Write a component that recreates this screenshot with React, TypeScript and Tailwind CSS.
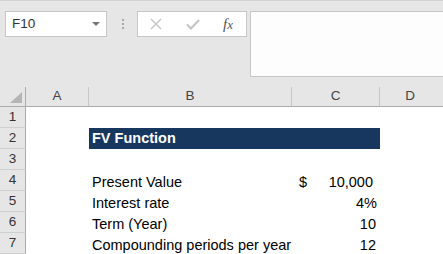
import { ReactNode } from 'react'

type Row = {
  n: number
  b?: ReactNode
  c?: ReactNode
  title?: boolean
}

const rows: Row[] = [
  { n: 1 },
  { n: 2, title: true },
  { n: 3 },
  {
    n: 4,
    b: 'Present Value',
    c: (
      <div className="flex justify-between pl-[7px] pr-[7px]">
        <span>$</span>
        <span>10,000</span>
      </div>
    ),
  },
  { n: 5, b: 'Interest rate', c: <div className="text-right pr-[3px]">4%</div> },
  { n: 6, b: 'Term (Year)', c: <div className="text-right pr-[4px]">10</div> },
  {
    n: 7,
    b: 'Compounding periods per year',
    c: <div className="text-right pr-[4px]">12</div>,
  },
]

function Toolbar() {
  return (
    <div className="h-[87px] bg-[#e6e6e6] border-t border-[#d2d2d2] flex items-start pt-[10px] pl-[5px]">
      {/* name box */}
      <div className="w-[102px] h-[26px] shrink-0 border border-[#c6c6c6] bg-white flex items-center justify-between pl-[6px] pr-[6px] text-[13.5px] text-[#333]">
        <span>F10</span>
        <svg width="8" height="4" viewBox="0 0 8 4">
          <path d="M0 0h8L4 4z" fill="#777" />
        </svg>
      </div>
      {/* grip */}
      <div className="ml-[15px] mt-[8px] flex flex-col gap-[2px] shrink-0">
        <span className="w-[2px] h-[2px] bg-[#a8a8a8]" />
        <span className="w-[2px] h-[2px] bg-[#a8a8a8]" />
        <span className="w-[2px] h-[2px] bg-[#a8a8a8]" />
      </div>
      {/* cancel / enter / fx */}
      <div className="ml-[13px] w-[110px] h-[26px] shrink-0 border border-[#c6c6c6] bg-white flex items-center pl-[12px]">
        <svg width="12" height="12" viewBox="0 0 12 12">
          <path d="M1 1l10 10M11 1L1 11" stroke="#c4c4c4" strokeWidth="1.4" />
        </svg>
        <svg className="ml-[24px]" width="14" height="11" viewBox="0 0 14 11">
          <path d="M1 5.5l4 4L13 1" stroke="#c4c4c4" strokeWidth="2" fill="none" />
        </svg>
        <span className="ml-[23px] font-['Liberation_Serif',serif] italic text-[15px] text-[#555] leading-none">
          f<span className="text-[13px]">x</span>
        </span>
      </div>
      {/* formula bar */}
      <div className="ml-[3px] flex-1 h-[66px] border border-r-0 border-[#c6c6c6] bg-[#fdfdfd]" />
    </div>
  )
}

function ColumnHeaders() {
  return (
    <div className="h-[20px] flex bg-[#e6e6e6] border-b border-[#ababab] text-[13.5px] text-[#444]">
      <div className="w-[26px] shrink-0 border-r border-[#ababab] relative">
        <svg className="absolute right-[3px] bottom-[3px]" width="12" height="11" viewBox="0 0 12 11">
          <path d="M12 0v11H0z" fill="#b5b5b5" />
        </svg>
      </div>
      <div className="w-[63px] shrink-0 border-r border-[#c8c8c8] flex items-center justify-center">A</div>
      <div className="w-[203px] shrink-0 border-r border-[#c8c8c8] flex items-center justify-center">B</div>
      <div className="w-[88px] shrink-0 border-r border-[#c8c8c8] flex items-center justify-center">C</div>
      <div className="flex-1 flex items-center justify-center pr-[3px]">D</div>
    </div>
  )
}

export default function App() {
  return (
    <div className="w-[443px] h-[254px] overflow-hidden bg-white font-['Liberation_Sans',sans-serif]">
      <Toolbar />
      <ColumnHeaders />
      {rows.map((r) => (
        <div key={r.n} className="h-[21px] flex">
          <div className="w-[26px] shrink-0 bg-[#e6e6e6] border-r border-b border-r-[#ababab] border-b-[#d0d0d0] flex items-center justify-center text-[13.5px] text-[#333]">
            {r.n}
          </div>
          <div className="w-[63px] shrink-0" />
          {r.title ? (
            <div className="w-[291px] shrink-0 bg-[#17375e] text-white font-bold text-[14.5px] flex items-center pl-[3px] pt-[1px]">
              FV Function
            </div>
          ) : (
            <>
              <div className="w-[203px] shrink-0 text-[14.5px] leading-[18px] text-black flex items-end pl-[3px]">
                {r.b}
              </div>
              <div className="w-[88px] shrink-0 text-[14.5px] leading-[18px] text-black flex flex-col justify-end">
                {r.c}
              </div>
            </>
          )}
          <div className="flex-1" />
        </div>
      ))}
    </div>
  )
}
